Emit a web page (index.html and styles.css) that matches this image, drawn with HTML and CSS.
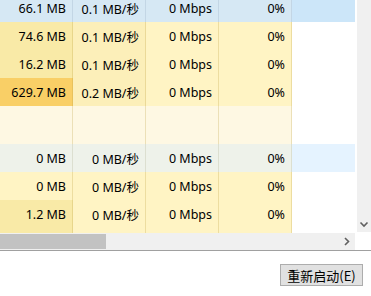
FILE: index.html
```html
<!doctype html>
<html lang="zh-CN">
  <head>
    <meta charset="UTF-8" />
    <meta name="viewport" content="width=device-width, initial-scale=1.0" />
    <title>任务管理器</title>
    <link rel="stylesheet" href="styles.css">
  </head>
  <body>
    <div class="window">
      <div class="table-area">
        <div class="list">
          <div class="row selected">
            <div class="cell">66.1 MB</div>
            <div class="cell">0.1 MB/秒</div>
            <div class="cell">0 Mbps</div>
            <div class="cell">0%</div>
            <div class="cell rest"></div>
          </div>
          <div class="row">
            <div class="cell heat-2">74.6 MB</div>
            <div class="cell heat-col2">0.1 MB/秒</div>
            <div class="cell heat-1">0 Mbps</div>
            <div class="cell heat-1">0%</div>
            <div class="cell rest"></div>
          </div>
          <div class="row">
            <div class="cell heat-2">16.2 MB</div>
            <div class="cell heat-col2">0.1 MB/秒</div>
            <div class="cell heat-1">0 Mbps</div>
            <div class="cell heat-1">0%</div>
            <div class="cell rest"></div>
          </div>
          <div class="row">
            <div class="cell heat-hot">629.7 MB</div>
            <div class="cell heat-col2">0.2 MB/秒</div>
            <div class="cell heat-1">0 Mbps</div>
            <div class="cell heat-1">0%</div>
            <div class="cell rest"></div>
          </div>
          <div class="row group">
            <div class="cell pale"></div>
            <div class="cell pale"></div>
            <div class="cell pale"></div>
            <div class="cell pale"></div>
            <div class="cell rest"></div>
          </div>
          <div class="row hover">
            <div class="cell">0 MB</div>
            <div class="cell">0 MB/秒</div>
            <div class="cell">0 Mbps</div>
            <div class="cell">0%</div>
            <div class="cell rest"></div>
          </div>
          <div class="row">
            <div class="cell heat-1">0 MB</div>
            <div class="cell heat-1">0 MB/秒</div>
            <div class="cell heat-1">0 Mbps</div>
            <div class="cell heat-1">0%</div>
            <div class="cell rest"></div>
          </div>
          <div class="row">
            <div class="cell heat-2">1.2 MB</div>
            <div class="cell heat-1">0 MB/秒</div>
            <div class="cell heat-1">0 Mbps</div>
            <div class="cell heat-1">0%</div>
            <div class="cell rest"></div>
          </div>
          <!-- next row, only its top edge shows above the scrollbar -->
          <div class="row">
            <div class="cell heat-2"></div>
            <div class="cell heat-1"></div>
            <div class="cell heat-1"></div>
            <div class="cell heat-1"></div>
            <div class="cell rest"></div>
          </div>
        </div>
        <div class="vscroll">
          <svg class="arrow" width="14" height="16" viewBox="0 0 14 16">
            <path d="M3.5 6.5 L7 10 L10.5 6.5" fill="none" stroke="#606060" stroke-width="1.6" />
          </svg>
        </div>
      </div>

      <div class="hscroll">
        <div class="track">
          <div class="thumb"></div>
          <svg class="arrow" width="16" height="17" viewBox="0 0 16 17">
            <path d="M6 5 L9.5 8.5 L6 12" fill="none" stroke="#606060" stroke-width="1.6" />
          </svg>
        </div>
        <div class="corner"></div>
      </div>

      <div class="footer">
        <button class="btn">重新启动(E)</button>
      </div>
    </div>
  </body>
</html>
```

FILE: styles.css
```css
body {
  margin: 0;
  background: #fff;
  font-family: "Noto Sans", "Noto Sans CJK SC", sans-serif;
  font-size: 12.5px;
  color: #000;
}
.window {
  width: 371px;
  height: 296px;
  overflow: hidden;
}
.table-area {
  display: flex;
  height: 233px;
  overflow: hidden;
}
.list {
  width: 355px;
  flex: none;
  margin-top: -6px;
}
.row {
  display: grid;
  grid-template-columns: 73px 73px 73px 73px 1fr;
  height: 28px;
}
.row.group {
  height: 38px;
}
.cell {
  box-sizing: border-box;
  border-right: 1px solid rgba(190, 160, 70, 0.28);
  padding-right: 6px;
  display: flex;
  align-items: center;
  justify-content: flex-end;
  white-space: nowrap;
}
.cell.rest {
  border-right: none;
}
.heat-1 {
  background: #fff4c4;
}
.heat-2 {
  background: #f9eaa7;
}
.heat-col2 {
  background: #fcefb9;
}
.heat-hot {
  background: #f9cf66;
}
.pale {
  background: #fef8e3;
}
.selected .cell {
  background: #d6e8f4;
  border-right-color: rgba(160, 180, 200, 0.35);
}
.selected .rest {
  background: #cce6f9;
}
.hover .cell {
  background: #eef2ea;
  border-right-color: rgba(180, 180, 150, 0.3);
}
.hover .rest {
  background: #e5f3ff;
}
.vscroll {
  width: 14px;
  margin-left: 2px;
  height: 232px;
  background: #f0f0f0;
  display: flex;
  flex-direction: column;
  justify-content: flex-end;
}
.hscroll {
  display: flex;
  height: 17px;
  border-bottom: 1px solid #a0a0a0;
}
.track {
  width: 355px;
  background: #f0f0f0;
  display: flex;
  align-items: flex-start;
  justify-content: space-between;
}
.thumb {
  width: 106px;
  height: 15px;
  margin-top: 1px;
  background: #c2c2c2;
}
.corner {
  flex: 1;
  background: #fff;
}
.footer {
  display: flex;
  justify-content: flex-end;
  padding: 13px 8px 0 0;
}
.btn {
  width: 83px;
  height: 22px;
  border: 1px solid #adadad;
  background: #e1e1e1;
  font-family: "Noto Sans CJK SC", sans-serif;
  font-size: 13px;
  color: #000;
  padding: 0;
}
```
